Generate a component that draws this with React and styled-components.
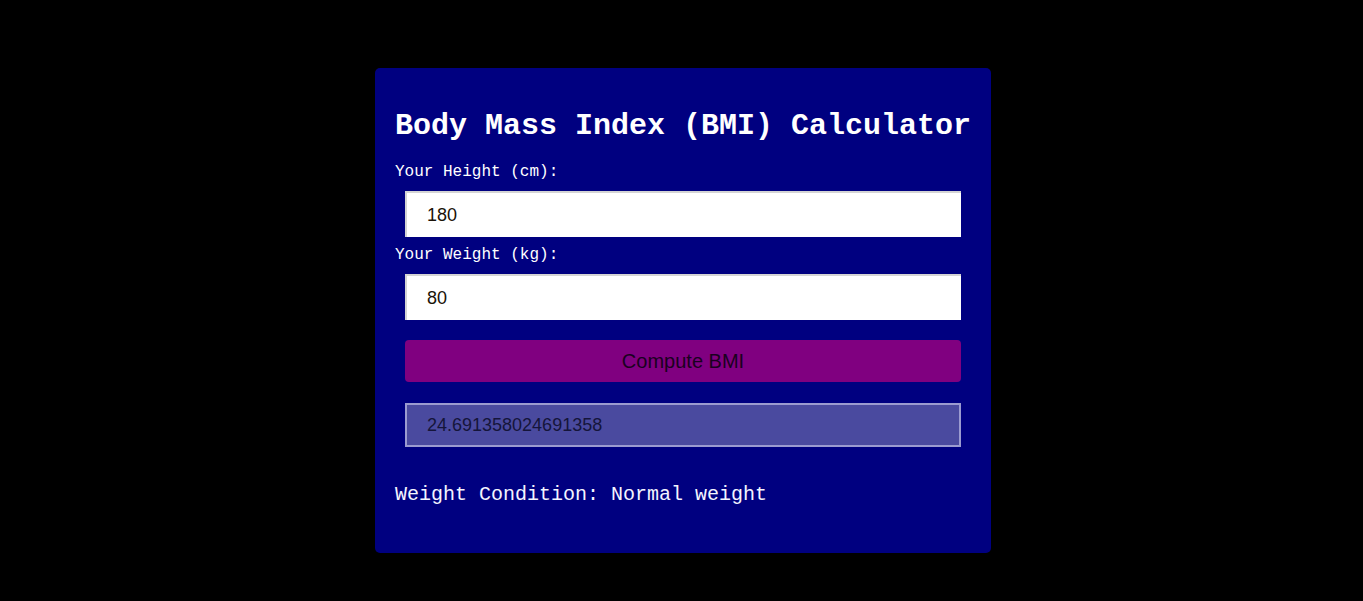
import React from "react";
import styled, { createGlobalStyle } from "styled-components";

const Global = createGlobalStyle`
  html, body { margin: 0; padding: 0; background: #000; }
  body { font-family: "Liberation Mono", "Courier New", monospace; }
`;

const Page = styled.div`
  min-height: 601px;
  display: flex;
  justify-content: center;
  align-items: flex-start;
  padding-top: 68px;
  box-sizing: border-box;
`;

const Card = styled.div`
  width: 616px;
  box-sizing: border-box;
  background: #000080;
  border-radius: 5px;
  padding: 20px 20px 46px;
  color: #fff;
  margin-left: 3px;
`;

const Title = styled.h1`
  font-family: "Liberation Mono", "Courier New", monospace;
  font-weight: bold;
  font-size: 30px;
  margin: 21px 0 20px;
  white-space: nowrap;
  line-height: 34px;
`;

const Label = styled.label`
  display: block;
  font-size: 16px;
  line-height: 18px;
  margin: 0;
`;

const Field = styled.input`
  display: block;
  box-sizing: border-box;
  width: calc(100% - 20px);
  height: 46px;
  margin: 10px 10px 9px;
  padding: 0 20px;
  font-family: "Liberation Sans", Arial, sans-serif;
  font-size: 18px;
  color: #1a1208;
  background: #fff;
  border: none;
  border-top: 2px solid #d4d4d4;
  border-left: 2px solid #d4d4d4;
  outline: none;
`;

const Button = styled.button`
  display: block;
  box-sizing: border-box;
  width: calc(100% - 20px);
  height: 42px;
  margin: 20px 10px 21px;
  border: none;
  border-radius: 4px;
  background: #800080;
  color: #1a0020;
  font-family: "Liberation Sans", Arial, sans-serif;
  font-size: 20px;
`;

const Result = styled.div`
  box-sizing: border-box;
  width: calc(100% - 20px);
  height: 44px;
  margin: 0 10px;
  padding: 0 20px;
  display: flex;
  align-items: center;
  background: #4a4a9f;
  border: 2px solid #9b9bd0;
  color: #15153a;
  font-family: "Liberation Sans", Arial, sans-serif;
  font-size: 18px;
`;

const Condition = styled.p`
  font-size: 20px;
  line-height: 24px;
  margin: 36px 0 0;
  color: #f4f4ff;
`;

export default function App() {
  return (
    <>
      <Global />
      <Page>
        <Card>
          <Title>Body Mass Index (BMI) Calculator</Title>
          <Label>Your Height (cm):</Label>
          <Field defaultValue="180" />
          <Label>Your Weight (kg):</Label>
          <Field defaultValue="80" />
          <Button>Compute BMI</Button>
          <Result>24.691358024691358</Result>
          <Condition>Weight Condition: Normal weight</Condition>
        </Card>
      </Page>
    </>
  );
}
